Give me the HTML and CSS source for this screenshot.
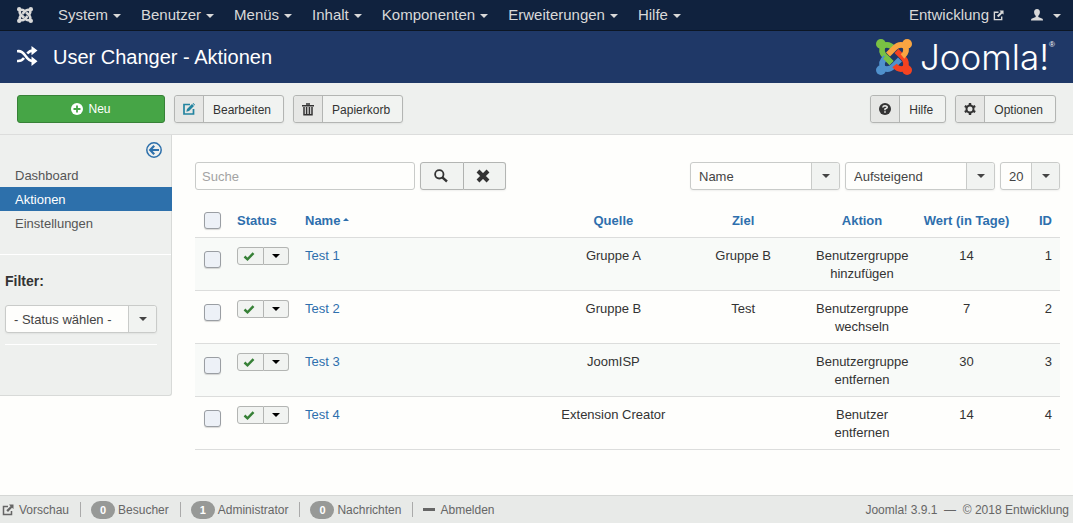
FILE: index.html
```html
<!DOCTYPE html>
<html lang="de">
<head>
<meta charset="utf-8">
<title>User Changer - Aktionen</title>
<link rel="stylesheet" href="styles.css">
</head>
<body>
<svg class="sprite" aria-hidden="true">
  <symbol id="arm" viewBox="0 0 36 36" overflow="visible">
    <circle cx="4.9" cy="4.9" r="4.9" fill="currentColor"/>
    <path d="M17.500 9.500C14.500 6 11 5 7 7C5 11 6 14.500 9 17.500L15.500 24" fill="none" stroke="currentColor" stroke-width="5.600"/>
  </symbol>
  <symbol id="joomla" viewBox="0 0 36 36">
    <g class="arm-green"><use href="#arm" width="36" height="36"/></g>
    <g class="arm-blue" transform="rotate(-90 18 18)"><use href="#arm" width="36" height="36"/></g>
    <g class="arm-red" transform="rotate(180 18 18)"><use href="#arm" width="36" height="36"/></g>
    <g class="arm-orange" transform="rotate(90 18 18)"><use href="#arm" width="36" height="36"/></g>
    <path class="arm-green" d="M9 17.500L15.500 24" stroke="currentColor" stroke-width="5.600"/>
  </symbol>
  <symbol id="external" viewBox="0 0 12 12">
    <path d="M6 2.500H1.500V10.500H9.500V7" fill="none" stroke="currentColor" stroke-width="1.500"/>
    <path d="M7 .500H11.500V5L10 3.700L6 8L4.300 6.300L8.500 2.200Z" fill="currentColor"/>
  </symbol>
  <symbol id="check" viewBox="0 0 12 12"><path d="M1.500 6.500L4.500 9.300L10.500 3.200" fill="none" stroke="currentColor" stroke-width="2.500"/></symbol>
</svg>

<nav class="navbar">
  <a class="nav-logo" href="#" aria-label="Joomla"><svg width="16" height="16"><use href="#joomla"/></svg></a>
  <ul class="menu">
    <li><a href="#">System <span class="caret"></span></a></li>
    <li><a href="#">Benutzer <span class="caret"></span></a></li>
    <li><a href="#">Menüs <span class="caret"></span></a></li>
    <li><a href="#">Inhalt <span class="caret"></span></a></li>
    <li><a href="#">Komponenten <span class="caret"></span></a></li>
    <li><a href="#">Erweiterungen <span class="caret"></span></a></li>
    <li><a href="#">Hilfe <span class="caret"></span></a></li>
  </ul>
  <div class="nav-right">
    <a class="site" href="#">Entwicklung <svg width="11" height="11"><use href="#external"/></svg></a>
    <a class="user" href="#" aria-label="Benutzerkonto">
      <svg width="12" height="12" viewBox="0 0 12 12"><path d="M6 0C8 0 9 1.300 8.900 3.200C8.800 5 8 6.300 7.300 6.800V8L11.500 9.800Q12 10.200 12 11.500H0Q0 10.200.500 9.800L4.700 8V6.800C4 6.300 3.200 5 3.100 3.200C3 1.300 4 0 6 0Z" fill="currentColor"/></svg>
      <span class="caret"></span>
    </a>
  </div>
</nav>

<header class="header">
  <svg class="title-icon" width="21" height="20" viewBox="0 0 21 20"><g fill="none" stroke="currentColor" stroke-width="2.600"><path d="M0 5.300C5 4.500 6.500 7.500 9 10.500C11 13.500 12.500 15 16 15"/><path d="M0 15C4 15.500 5.500 14 7 12M10.300 7.500C12 5.500 13.500 4.600 16 4.600"/></g><path d="M14.500 0L20.500 4.600L14.500 9.300ZM14.500 10.500L20.500 15.200L14.500 20Z" fill="currentColor"/></svg>
  <h1>User Changer - Aktionen</h1>
  <a class="brand" href="#" aria-label="Joomla!">
    <svg class="brand-mark" width="36" height="36"><use href="#joomla"/></svg>
    <span class="wordmark">Joomla!</span><sup>®</sup>
  </a>
</header>

<div class="toolbar">
  <button class="btn-new" type="button"><svg width="12" height="12" viewBox="0 0 12 12"><circle cx="6" cy="6" r="6" fill="currentColor"/><path d="M6 2.500V9.500M2.500 6H9.500" stroke="#46a546" stroke-width="1.800"/></svg>Neu</button>
  <button class="tool" type="button"><span class="tool-icon edit"><svg width="12" height="12" viewBox="0 0 12 12"><path d="M7 1.500H1V11H10.500V6" fill="none" stroke="currentColor" stroke-width="1.700"/><path d="M3.300 8.800L4 6L9 1L11 3L6 8ZM9.600.500L10.300 0L12 1.700L11.500 2.400Z" fill="currentColor"/></svg></span><span class="tool-text">Bearbeiten</span></button>
  <button class="tool" type="button"><span class="tool-icon"><svg width="12" height="13" viewBox="0 0 12 13"><path d="M0 2.700H12M4 1H8M2 4V11.800H10V4M4.600 4V11M7.400 4V11" fill="none" stroke="currentColor" stroke-width="1.500"/></svg></span><span class="tool-text">Papierkorb</span></button>
  <button class="tool push" type="button"><span class="tool-icon"><svg width="12" height="12" viewBox="0 0 12 12"><circle cx="6" cy="6" r="6" fill="currentColor"/><path d="M3.800 4.500Q4 2.800 6 2.800Q8.200 2.900 8.200 4.300Q8.100 5.300 6 6V7.300M6 8.200V9.800" fill="none" stroke="#e6e7e5" stroke-width="1.600"/></svg></span><span class="tool-text">Hilfe</span></button>
  <button class="tool" type="button"><span class="tool-icon"><svg width="12" height="12" viewBox="0 0 12 12"><circle cx="6" cy="6" r="3.500" fill="none" stroke="currentColor" stroke-width="2"/><path d="M6 0V2.500M6 9.500V12M.800 3L3 4.200M9 7.800L11.200 9M.800 9L3 7.800M9 4.200L11.200 3" stroke="currentColor" stroke-width="2.400"/></svg></span><span class="tool-text">Optionen</span></button>
</div>

<div class="page">
  <aside class="sidebar">
    <button class="collapse" type="button" aria-label="Seitenleiste ausblenden"><svg width="16" height="16" viewBox="0 0 16 16" fill="none" stroke="currentColor"><circle cx="8" cy="8" r="7.200" stroke-width="1.500"/><path d="M13 8H5M8.200 3.800L4.200 8L8.200 12.200" stroke-width="2.200"/></svg></button>
    <ul class="subnav">
      <li><a href="#">Dashboard</a></li>
      <li><a class="active" href="#">Aktionen</a></li>
      <li><a href="#">Einstellungen</a></li>
    </ul>
    <div class="filter">
      <label for="status">Filter:</label>
      <div class="select"><select id="status"><option>- Status wählen -</option></select><span class="arrow"><span class="caret"></span></span></div>
    </div>
  </aside>

  <main class="main">
    <form class="search-tools">
      <input class="search" type="text" placeholder="Suche" aria-label="Suche">
      <div class="search-btns">
        <button type="button" aria-label="Suchen"><svg width="14" height="14" viewBox="0 0 14 14" fill="none" stroke="currentColor"><circle cx="5.300" cy="5.300" r="4.200" stroke-width="1.800"/><path d="M8.300 8.300L13 12.500" stroke-width="2.400"/></svg></button>
        <button type="button" aria-label="Zurücksetzen"><svg width="14" height="14" viewBox="0 0 14 14"><path d="M2 2L12 12M12 2L2 12" stroke="currentColor" stroke-width="4"/></svg></button>
      </div>
      <div class="select wide push"><select aria-label="Sortieren nach"><option>Name</option></select><span class="arrow"><span class="caret"></span></span></div>
      <div class="select wide"><select aria-label="Richtung"><option>Aufsteigend</option></select><span class="arrow"><span class="caret"></span></span></div>
      <div class="select narrow"><select aria-label="Anzahl"><option>20</option></select><span class="arrow"><span class="caret"></span></span></div>
    </form>

    <table class="list">
      <thead>
        <tr>
          <th class="c-check"><input type="checkbox" aria-label="Alle auswählen"></th>
          <th class="c-status"><a href="#">Status</a></th>
          <th class="c-name"><a href="#">Name<span class="sort-up"></span></a></th>
          <th class="c-group"><a href="#">Quelle</a></th>
          <th class="c-group"><a href="#">Ziel</a></th>
          <th class="c-action"><a href="#">Aktion</a></th>
          <th class="c-value"><a href="#">Wert (in Tage)</a></th>
          <th class="c-id"><a href="#">ID</a></th>
        </tr>
      </thead>
      <tbody>
        <tr>
          <td><input type="checkbox" aria-label="Test 1 auswählen"></td>
          <td><div class="state"><button type="button" aria-label="Aktiviert"><svg width="12" height="12"><use href="#check"/></svg></button><button type="button" aria-label="Mehr"><span class="caret"></span></button></div></td>
          <td class="c-name"><a href="#">Test 1</a></td><td>Gruppe A</td><td>Gruppe B</td><td>Benutzergruppe hinzufügen</td><td>14</td><td class="c-id">1</td>
        </tr>
        <tr>
          <td><input type="checkbox" aria-label="Test 2 auswählen"></td>
          <td><div class="state"><button type="button" aria-label="Aktiviert"><svg width="12" height="12"><use href="#check"/></svg></button><button type="button" aria-label="Mehr"><span class="caret"></span></button></div></td>
          <td class="c-name"><a href="#">Test 2</a></td><td>Gruppe B</td><td>Test</td><td>Benutzergruppe wechseln</td><td>7</td><td class="c-id">2</td>
        </tr>
        <tr>
          <td><input type="checkbox" aria-label="Test 3 auswählen"></td>
          <td><div class="state"><button type="button" aria-label="Aktiviert"><svg width="12" height="12"><use href="#check"/></svg></button><button type="button" aria-label="Mehr"><span class="caret"></span></button></div></td>
          <td class="c-name"><a href="#">Test 3</a></td><td>JoomISP</td><td></td><td>Benutzergruppe entfernen</td><td>30</td><td class="c-id">3</td>
        </tr>
        <tr>
          <td><input type="checkbox" aria-label="Test 4 auswählen"></td>
          <td><div class="state"><button type="button" aria-label="Aktiviert"><svg width="12" height="12"><use href="#check"/></svg></button><button type="button" aria-label="Mehr"><span class="caret"></span></button></div></td>
          <td class="c-name"><a href="#">Test 4</a></td><td>Extension Creator</td><td></td><td>Benutzer entfernen</td><td>14</td><td class="c-id">4</td>
        </tr>
      </tbody>
    </table>
  </main>
</div>

<footer class="footer">
  <ul>
    <li><a href="#"><svg width="12" height="12"><use href="#external"/></svg>Vorschau</a></li>
    <li><span class="badge">0</span>Besucher</li>
    <li><span class="badge">1</span>Administrator</li>
    <li><a href="#"><span class="badge">0</span>Nachrichten</a></li>
    <li><a href="#"><span class="dash"></span>Abmelden</a></li>
  </ul>
  <p>Joomla! 3.9.1 &nbsp;—&nbsp; © 2018 Entwicklung</p>
</footer>
</body>
</html>
```
FILE: styles.css
```css
* { box-sizing: border-box; }

body {
  margin: 0;
  min-height: 100vh;
  display: flex;
  flex-direction: column;
  background: #fefefc;
  color: #333;
  font: 13px/18px "Liberation Sans", Arial, sans-serif;
}

a { color: #2e6fad; text-decoration: none; }
ul { list-style: none; margin: 0; padding: 0; }
button, input, select { font: inherit; color: inherit; margin: 0; }
button { padding: 0; cursor: pointer; }
svg { flex: none; display: block; }
.sprite { position: absolute; width: 0; height: 0; }
.push { margin-left: auto; }

.caret {
  display: inline-block;
  border: 4px solid transparent;
  border-top-color: currentColor;
  border-bottom: 0;
}

/* Top navigation */
.navbar {
  display: flex;
  align-items: center;
  height: 31px;
  padding: 0 12px 0 17px;
  background: #10223e;
  border-bottom: 1px solid #0c1624;
  font-size: 15px;
  color: #d9d9d9;
}
.navbar a { display: flex; align-items: center; color: inherit; }
.menu { display: flex; margin-left: 15px; }
.menu a { padding: 0 10px; gap: 5px; }
.navbar .caret { margin-top: 2px; }
.nav-right { display: flex; margin-left: auto; }
.site { gap: 4px; }
.user { gap: 10px; margin-left: 27px; }

/* Title bar */
.header {
  display: flex;
  align-items: center;
  height: 52px;
  padding: 0 18px 0 17px;
  background: #1f3867;
  color: #fff;
}
.title-icon { margin-bottom: 3px; }
.header h1 { margin: 0 0 0 15px; font-size: 20px; line-height: 24px; font-weight: normal; }
.brand { display: flex; align-items: center; margin-left: auto; color: #fff; }
.wordmark { margin-left: 8px; font: 300 35px/40px Inter, sans-serif; }
.brand sup { align-self: flex-start; font-size: 8px; line-height: 16px; }
.arm-green { color: var(--green, inherit); }
.arm-blue { color: var(--blue, inherit); }
.arm-red { color: var(--red, inherit); }
.arm-orange { color: var(--orange, inherit); }
.brand-mark { --green: #7ac143; --blue: #5091cd; --red: #f44321; --orange: #f9a541; }

/* Toolbar */
.toolbar {
  display: flex;
  gap: 9px;
  padding: 12px 17px 11px;
  background: #eef0ee;
  border-bottom: 1px solid #dcdddc;
  font-size: 12px;
}
.btn-new {
  display: flex;
  align-items: center;
  justify-content: center;
  gap: 5px;
  width: 148px;
  height: 28px;
  background: #46a546;
  border: 1px solid #378137;
  border-radius: 3px;
  color: #fff;
}
.tool {
  display: flex;
  height: 28px;
  background: #f1f3f1;
  border: 1px solid #b3b5b3;
  border-radius: 3px;
  box-shadow: 0 1px 2px rgba(0, 0, 0, .06);
}
.tool-icon {
  display: flex;
  align-items: center;
  justify-content: center;
  width: 29px;
  height: 100%;
  background: #e6e7e5;
  border-right: 1px solid #b3b5b3;
  border-radius: 3px 0 0 3px;
}
.tool-icon.edit { color: #2384a0; }
.tool-text { padding: 0 12px 0 9px; line-height: 28px; }

/* Page columns */
.page { flex: 1; display: flex; align-items: flex-start; }

.sidebar {
  flex: none;
  width: 172px;
  padding: 7px 0 50px;
  background: #eef0ee;
  border: solid #d8dad8;
  border-width: 0 1px 1px 0;
  border-radius: 0 0 3px 0;
}
.collapse {
  display: block;
  margin: 0 9px 5px auto;
  border: 0;
  background: none;
  color: #2d70ab;
}
.subnav { padding-bottom: 19px; border-bottom: 1px solid #fff; }
.subnav a { display: block; padding: 4px 15px 2px; color: #555; }
.subnav a.active { margin-right: -1px; background: #2d70ab; color: #fff; }
.filter { margin: 17px 14px 0 5px; padding-bottom: 11px; border-bottom: 1px solid #fff; }
.filter label { display: block; margin-bottom: 15px; font-size: 14px; font-weight: bold; }

/* Drop-downs: the arrow box shares the grid cell with the select */
.select { display: grid; height: 28px; }
.select > * { grid-area: 1 / 1; }
.select select {
  appearance: none;
  width: 100%;
  padding: 1px 30px 0 8px;
  background: #fefefc;
  border: 1px solid #c9cbc9;
  border-radius: 3px;
  box-shadow: 0 1px 2px rgba(0, 0, 0, .06);
  color: #444;
}
.arrow {
  justify-self: end;
  display: flex;
  align-items: center;
  justify-content: center;
  width: 28px;
  margin: 1px;
  background: #f1f3f1;
  border-left: 1px solid #c9cbc9;
  border-radius: 0 3px 3px 0;
  color: #444;
  pointer-events: none;
}
.wide { width: 150px; }
.narrow { width: 60px; }

/* Content */
.main { flex: 1; min-width: 0; padding: 27px 13px 27px 23px; }
.search-tools { display: flex; gap: 5px; margin-bottom: 13px; }
.search {
  width: 220px;
  height: 28px;
  padding: 0 6px;
  background: #fefefc;
  border: 1px solid #c9cbc9;
  border-radius: 3px;
}
.search::placeholder { color: #a3a3a3; opacity: 1; }
.search-btns { display: flex; }
.search-btns button {
  display: flex;
  align-items: center;
  justify-content: center;
  width: 44px;
  height: 28px;
  padding-right: 2px;
  background: #f1f3f1;
  border: 1px solid #b3b5b3;
  border-radius: 3px 0 0 3px;
  box-shadow: 0 1px 2px rgba(0, 0, 0, .06);
}
.search-btns button + button { width: 42px; padding-right: 4px; border-left: 0; border-radius: 0 3px 3px 0; }

.list { width: 100%; table-layout: fixed; border-collapse: collapse; text-align: center; }
.list th, .list td { padding: 9px 8px 7px; vertical-align: top; }
.list td { border-top: 1px solid #dcdddc; border-bottom: 1px solid #dcdddc; }
.list tbody tr:nth-child(odd) { background: #f8faf8; }
.list .c-name { text-align: left; }
.list .c-id { width: 43px; text-align: right; }
.c-check { width: 34px; }
.c-status { width: 68px; }
.c-group { width: 15%; }
.c-action { width: 108px; }
.c-value { width: 101px; white-space: nowrap; }
.list th.c-value { padding-left: 0; padding-right: 0; }
.list th.c-status { text-align: left; }
.sort-up {
  display: inline-block;
  margin-left: 3px;
  vertical-align: 4px;
  border: 3px solid transparent;
  border-bottom-color: currentColor;
  border-top: 0;
}
.list input {
  appearance: none;
  display: block;
  width: 17px;
  height: 17px;
  margin-left: 1px;
  background: #edf1f7;
  border: 1px solid #9a9ea3;
  border-radius: 3px;
  box-shadow: 0 1px 1px rgba(0, 0, 0, .15);
}
.list td input { margin-top: 4px; }

.state { display: flex; width: 52px; height: 18px; }
.state button {
  display: flex;
  align-items: center;
  justify-content: center;
  width: 27px;
  height: 18px;
  padding-right: 3px;
  background: #f1f3f1;
  border: 1px solid #b3b5b3;
  border-radius: 3px 0 0 3px;
  color: #378137;
}
.state button + button { width: 25px; padding: 0; border-left: 0; border-radius: 0 3px 3px 0; color: #000; }

/* Status bar */
.footer {
  display: flex;
  justify-content: space-between;
  align-items: center;
  height: 28px;
  padding: 0 4px 0 2px;
  background: #e8eae8;
  border-top: 1px solid #d5d7d5;
  color: #666;
  font-size: 12px;
}
.footer ul { display: flex; }
.footer li, .footer a { display: flex; align-items: center; color: inherit; }
.footer li { height: 15px; padding: 0 11px 0 10px; }
.footer li + li { border-left: 1px solid #aaa; }
.footer li:first-child { padding-left: 0; }
.footer li svg { margin-right: 5px; }
.footer p { margin: 0; }
.badge {
  width: 24px;
  margin-right: 3px;
  border-radius: 9px;
  background: #979997;
  color: #fff;
  font-size: 11px;
  font-weight: bold;
  text-align: center;
}
.dash { width: 12px; height: 3px; margin-right: 5px; background: #666; }
```
